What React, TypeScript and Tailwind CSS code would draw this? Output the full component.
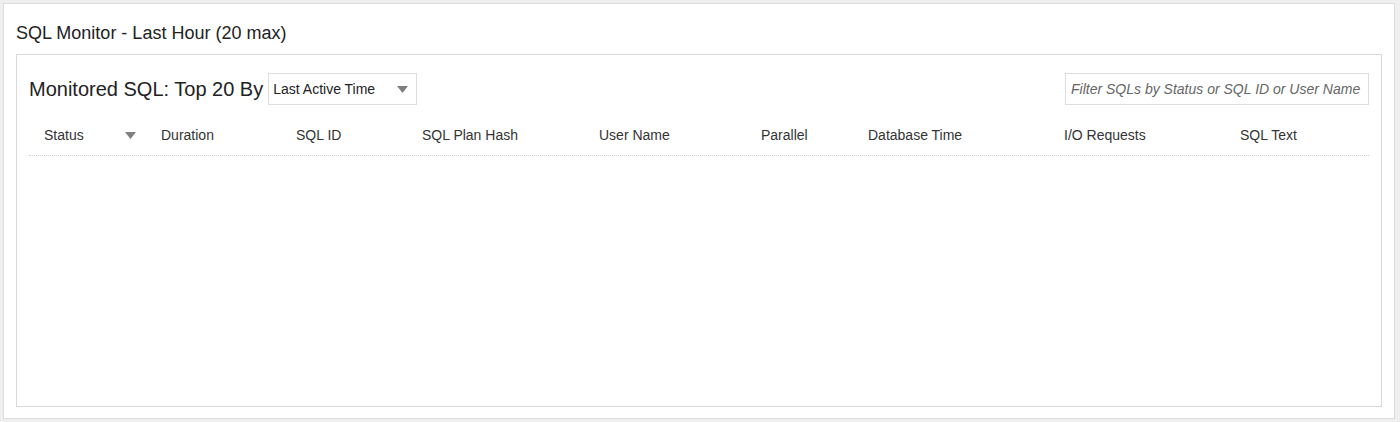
import React from "react";

const columns: { label: string; width: string; sort?: boolean }[] = [
  { label: "Status", width: "w-[117px]", sort: true },
  { label: "Duration", width: "w-[135px]" },
  { label: "SQL ID", width: "w-[126px]" },
  { label: "SQL Plan Hash", width: "w-[177px]" },
  { label: "User Name", width: "w-[162px]" },
  { label: "Parallel", width: "w-[107px]" },
  { label: "Database Time", width: "w-[196px]" },
  { label: "I/O Requests", width: "w-[176px]" },
  { label: "SQL Text", width: "w-[143px]" },
];

function Caret({ className }: { className?: string }) {
  return (
    <svg width="11" height="7" viewBox="0 0 11 7" className={className}>
      <path d="M0 0 L11 0 L5.5 7 Z" fill="#808080" />
    </svg>
  );
}

export default function App() {
  return (
    <div className="h-[422px] w-[1400px] bg-[#efefef] pt-[3px] pl-[3px] font-['Liberation_Sans',Arial,sans-serif] text-[#333]">
      <div className="h-[416px] w-[1392px] border border-[#dcdcdc] bg-white">
        {/* panel title */}
        <div className="flex h-[50px] items-center pl-[12px] pt-[9px] text-[18px] text-[#222]">
          SQL Monitor - Last Hour (20 max)
        </div>

        <div className="ml-[12px] h-[353px] w-[1366px] border border-[#d9d9d9] px-[12px]">
          {/* toolbar */}
          <div className="flex items-center justify-between pt-[18px]">
            <div className="flex items-center">
              <span className="text-[20px] text-[#222]">Monitored SQL: Top 20 By</span>
              <div className="ml-[5px] flex h-[32px] w-[149px] items-center justify-between border border-[#dedede] pl-[4px] pr-[8px] text-[14px] text-[#222]">
                <span>Last Active Time</span>
                <Caret />
              </div>
            </div>
            <div className="flex h-[32px] w-[304px] items-center border border-[#dedede] pl-[5px] text-[14px] italic text-[#666]">
              Filter SQLs by Status or SQL ID or User Name
            </div>
          </div>

          {/* table header */}
          <div className="mt-[12px] flex h-[39px] items-center border-b border-dotted border-[#cfcfcf] pb-[1px]">
            {columns.map((c) => (
              <div key={c.label} className={`${c.width} flex shrink-0 items-center pl-[15px] text-[14px] text-[#333]`}>
                <span>{c.label}</span>
                {c.sort && <Caret className="ml-[41px]" />}
              </div>
            ))}
          </div>
        </div>
      </div>
    </div>
  );
}
